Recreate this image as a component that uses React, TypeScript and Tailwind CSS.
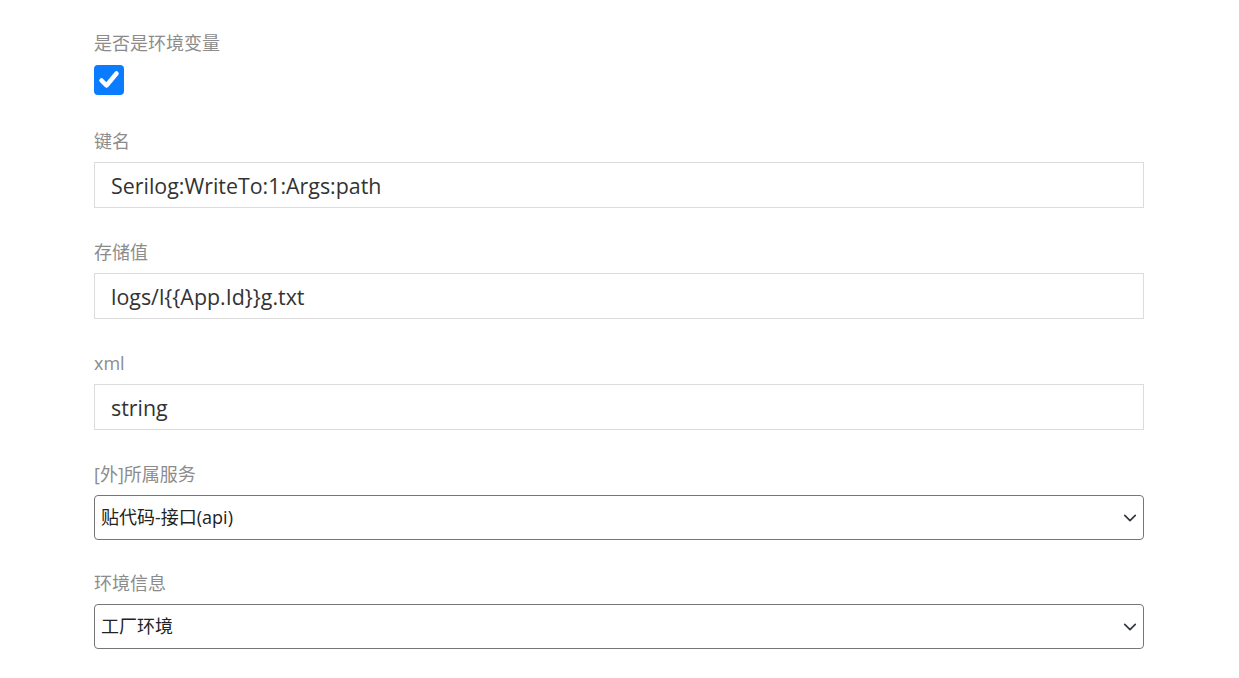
import React from "react";

const labelCls = "block text-[18px] leading-6 text-[#8c8c8c] mb-[9px]";
const inputCls =
  "block w-full h-[46px] border border-[#dcdcdc] bg-white px-4 text-[21.4px] text-[#333] outline-none";

function Chevron() {
  return (
    <svg width="14" height="14" viewBox="0 0 16 16" className="absolute right-[7px] top-1/2 -translate-y-1/2 pointer-events-none">
      <path d="M2 5l6 6 6-6" fill="none" stroke="#343a40" strokeWidth="2" strokeLinecap="round" strokeLinejoin="round" />
    </svg>
  );
}

function Field({ label, value }: { label: string; value: string }) {
  return (
    <div className="mb-8">
      <label className={labelCls}>{label}</label>
      <input className={inputCls} defaultValue={value} />
    </div>
  );
}

function SelectField({ label, value }: { label: string; value: string }) {
  return (
    <div className="mb-[31px]">
      <label className={labelCls}>{label}</label>
      <div className="relative">
        <select
          className="block w-full h-[45px] appearance-none rounded-[4px] border border-[#767676] bg-white pl-[6px] pr-8 text-[18px] text-[#222] outline-none"
          defaultValue={value}
        >
          <option>{value}</option>
        </select>
        <Chevron />
      </div>
    </div>
  );
}

export default function App() {
  return (
    <div
      className="min-h-screen bg-white"
      style={{ fontFamily: '"Open Sans", "Noto Sans CJK SC", sans-serif' }}
    >
      <div className="ml-[94px] w-[1050px] pt-[31px]">
        <div className="mb-[34px]">
          <label className="block text-[18px] leading-6 text-[#8c8c8c] mb-[10px]">是否是环境变量</label>
          <div className="w-[30px] h-[30px] rounded-[4px] bg-[#0a7cff] flex items-center justify-center">
            <svg width="24" height="24" viewBox="0 0 24 24">
              <path d="M4.5 12.5l5 5L19.5 5.5" fill="none" stroke="#fff" strokeWidth="4.5" strokeLinecap="round" strokeLinejoin="round" />
            </svg>
          </div>
        </div>
        <Field label="键名" value="Serilog:WriteTo:1:Args:path" />
        <Field label="存储值" value="logs/l{{App.Id}}g.txt" />
        <Field label="xml" value="string" />
        <SelectField label="[外]所属服务" value="贴代码-接口(api)" />
        <SelectField label="环境信息" value="工厂环境" />
      </div>
    </div>
  );
}
